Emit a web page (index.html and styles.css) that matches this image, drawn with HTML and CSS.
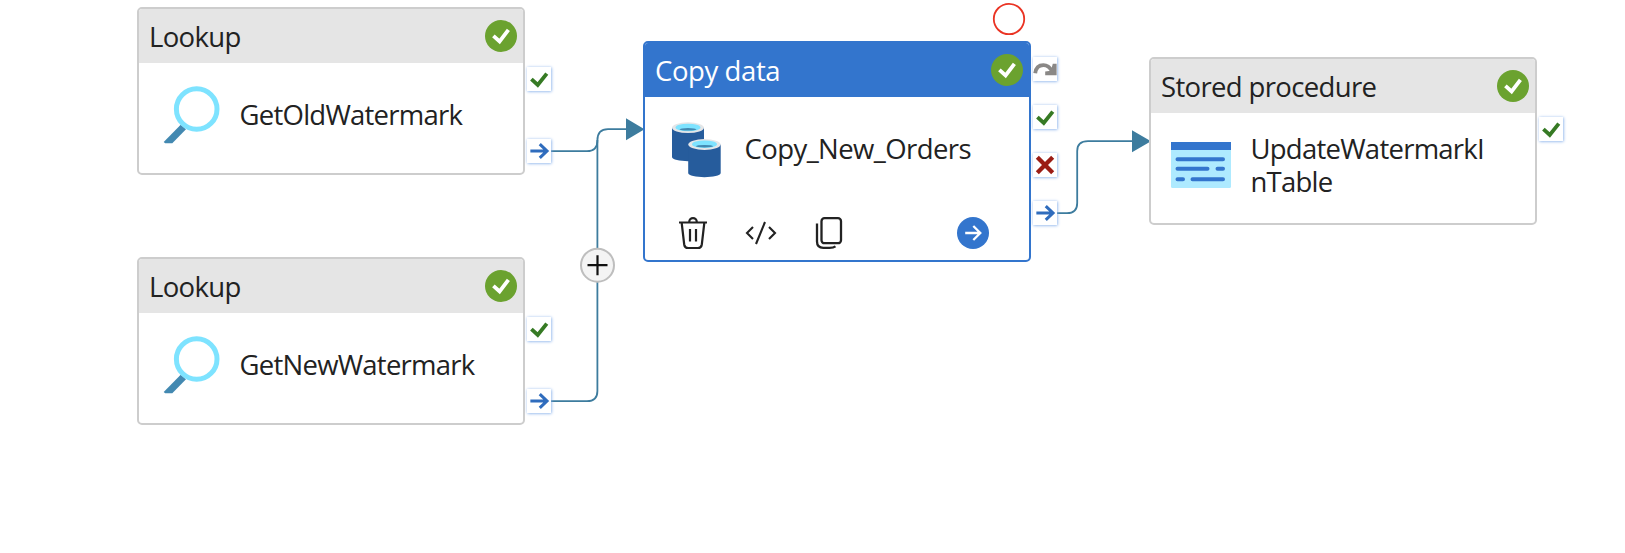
FILE: index.html
```html
<!DOCTYPE html>
<html lang="en">
<head>
<meta charset="utf-8">
<title>Pipeline</title>
<link rel="stylesheet" href="styles.css">
</head>
<body>
<svg class="defs" width="0" height="0" aria-hidden="true">
  <symbol id="badge" viewBox="0 0 32 32"><circle cx="16" cy="16" r="16" fill="#6ba22f"/><path d="M8.4 15.8l6.200 5.600L23.400 9.800" fill="none" stroke="#fff" stroke-width="3.800"/></symbol>
  <symbol id="ok" viewBox="0 0 25 25"><path d="M4.6 12.6l6.6 6L20.6 6.9" fill="none" stroke="#367a24" stroke-width="4"/></symbol>
  <symbol id="next" viewBox="0 0 25 25"><path d="M3.5 12.5H20.800M13.300 5.400l7.500 7.100-7.500 7.100" fill="none" stroke="#2f6cbd" stroke-width="3.200"/></symbol>
  <symbol id="fail" viewBox="0 0 25 25"><path d="M4.5 4.5l16 16M20.5 4.5L4.5 20.5" fill="none" stroke="#9b1c14" stroke-width="4.500"/></symbol>
  <symbol id="skip" viewBox="0 0 25 25"><path d="M2.3 17C3 11.300 6.300 8.500 10.800 8.500C14.500 8.500 17.500 10.500 20 15" fill="none" stroke="#8a8886" stroke-width="4"/><path d="M20.600 7h4v12H12.700v-4l6-.8z" fill="#8a8886"/></symbol>
  <symbol id="lens" viewBox="0 0 60 60"><path d="M3.700 58l1.500 1.300h7.100L26 45.300l-5.300-4.600z" fill="#4389b1"/><circle cx="36.700" cy="25" r="20.300" fill="#fff" stroke="#7ee3ff" stroke-width="5"/></symbol>
</svg>

<main class="canvas">
  <svg class="edges" width="1625" height="553">
    <g fill="none" stroke="#3d7c9e" stroke-width="1.800">
      <path d="M551 151.200H587Q597.400 151.200 597.400 140.500Q597.400 129.200 608 129.200H628"/>
      <path d="M551 401.200H587Q597.400 401.200 597.400 391V140"/>
      <path d="M1057 213.200H1067Q1077.200 213.200 1077.200 203V151Q1077.200 141.200 1088 141.200H1134"/>
    </g>
    <path d="M626 118.300L644.500 129.200L626 140.200zM1132 130.300L1151 141.200L1132 152.200z" fill="#3d7c9e"/>
    <circle cx="597.500" cy="265.200" r="16.500" fill="#f4f4f4" stroke="#bebebe" stroke-width="2"/>
    <path d="M587.500 265.200h20M597.500 255.200v20" stroke="#111" stroke-width="2.200"/>
    <circle cx="1009" cy="19" r="15.200" fill="none" stroke="#ea3323" stroke-width="1.800"/>
  </svg>

  <section class="node old">
    <header class="head"><span class="t-lookup">Lookup</span><svg class="badge"><use href="#badge"/></svg></header>
    <div class="body"><svg class="icon"><use href="#lens"/></svg><span class="name">GetOldWatermark</span></div>
    <div class="ports wide"><svg class="port"><use href="#ok"/></svg><svg class="port"><use href="#next"/></svg></div>
  </section>

  <section class="node new">
    <header class="head"><span class="t-lookup">Lookup</span><svg class="badge"><use href="#badge"/></svg></header>
    <div class="body"><svg class="icon"><use href="#lens"/></svg><span class="name">GetNewWatermark</span></div>
    <div class="ports wide"><svg class="port"><use href="#ok"/></svg><svg class="port"><use href="#next"/></svg></div>
  </section>

  <section class="node copy">
    <header class="head"><span class="t-copy">Copy data</span><svg class="badge"><use href="#badge"/></svg></header>
    <div class="body">
      <svg class="icon" viewBox="0 0 60 66">
        <path d="M7 12.700h32V42c0 5.500-32 5.500-32 0z" fill="#265c9c"/>
        <ellipse cx="23" cy="12.700" rx="16" ry="5.400" fill="#e4e6e8"/><ellipse cx="23" cy="12.500" rx="12.500" ry="3.800" fill="#7ee3ff"/><ellipse cx="23" cy="14.300" rx="8.500" ry="1.300" fill="#4389b1"/>
        <path d="M23.200 29.500h32.500V58c0 5.500-32.500 5.500-32.500 0z" fill="#265c9c"/>
        <ellipse cx="39.500" cy="29.500" rx="16.200" ry="5.400" fill="#e4e6e8"/><ellipse cx="39.500" cy="29.300" rx="12.500" ry="3.800" fill="#7ee3ff"/><ellipse cx="39.500" cy="31.200" rx="8.500" ry="1.300" fill="#4389b1"/>
      </svg>
      <span class="name n-copy">Copy_New_Orders</span>
    </div>
    <footer class="tools">
      <svg viewBox="0 0 32 34"><g fill="none" stroke="#222" stroke-width="2.200"><path d="M2 6.500h28M12.200 6c0-5.200 7.600-5.200 7.600 0M4.700 7l2.500 21.500q.5 3.500 3.800 3.500h10q3.300 0 3.800-3.500L27.300 7M13 13v12.500M19 13v12.500"/></g></svg>
      <svg viewBox="0 0 32 34"><path d="M8 11l-6 6 6 6M24 11l6 6-6 6M20 6l-9 22" fill="none" stroke="#222" stroke-width="2.100"/></svg>
      <svg viewBox="0 0 32 34"><g fill="none" stroke="#222" stroke-width="2.300"><rect x="8.500" y="2.200" width="19.500" height="25" rx="3"/><path d="M4 7.500v18q0 6.300 6.300 6.300h6.200q4 0 6-1.500"/></g></svg>
      <svg class="go" viewBox="0 0 32 32"><circle cx="16" cy="16" r="16" fill="#3375cd"/><path d="M8.200 16h15M16.300 9l7 7-7 7" fill="none" stroke="#fff" stroke-width="2.300"/></svg>
    </footer>
    <div class="ports"><svg class="port"><use href="#skip"/></svg><svg class="port"><use href="#ok"/></svg><svg class="port"><use href="#fail"/></svg><svg class="port"><use href="#next"/></svg></div>
  </section>

  <section class="node stored">
    <header class="head"><span class="t-stored">Stored procedure</span><svg class="badge"><use href="#badge"/></svg></header>
    <div class="body">
      <svg class="icon" viewBox="0 0 60 46"><rect width="60" height="46" rx="1.500" fill="#aeeaff"/><path d="M0 0h60v8H0z" fill="#3375cd"/><path d="M6.500 17.300h45.500M6.500 26.800h30M46.500 26.800h5.500M6.500 37.300h5.500M21.500 37.300h30.500" stroke="#3375cd" stroke-width="4" stroke-linecap="round"/></svg>
      <div class="name">UpdateWatermarkInTable</div>
    </div>
    <div class="ports"><svg class="port"><use href="#ok"/></svg></div>
  </section>
</main>
</body>
</html>
```

FILE: styles.css
```css
body { margin: 0; background: #fff; }
.defs { position: absolute; }
.canvas {
  position: relative;
  width: 1625px;
  height: 553px;
  overflow: hidden;
  font-family: "Open Sans", "Noto Sans", sans-serif;
  font-size: 27.5px;
  line-height: 33px;
  color: #222;
}
.edges { position: absolute; left: 0; top: 0; }

/* Activity cards, placed freely on the canvas */
.node {
  position: absolute;
  box-sizing: border-box;
  width: 388px;
  height: 168px;
  border: 2px solid #cdcdcd;
  border-radius: 5px;
  background: #fff;
  display: flex;
  flex-direction: column;
}
.old { left: 137px; top: 7px; }
.new { left: 137px; top: 257px; }
.copy { left: 643px; top: 41px; height: 220.500px; border-color: #3375cd; }
.stored { left: 1149px; top: 57px; }

.head {
  display: flex;
  align-items: center;
  justify-content: space-between;
  height: 54px;
  padding: 0 6px 0 10px;
  border-radius: 3px 3px 0 0;
  background: #e5e5e5;
  white-space: nowrap;
}
.copy .head { background: #3375cd; color: #fff; }
.badge { width: 32px; height: 32px; }

.body {
  display: flex;
  align-items: center;
  gap: 19.500px;
  height: 103px;
  padding-left: 21px;
}
.icon { width: 60px; height: 60px; flex: none; margin-top: -1px; }
.copy .icon { height: 66px; margin-top: -2px; }
.copy .body { padding-left: 20px; }
.stored .icon { height: 46px; margin-top: 1px; }
.stored .body { padding-left: 20px; }
.name { width: 240px; overflow-wrap: anywhere; letter-spacing: -0.75px; }
.n-copy { letter-spacing: -0.58px; }

.tools { display: flex; align-items: center; padding-left: 32px; margin-top: 16px; }
.tools svg { width: 32px; height: 34px; margin-right: 36px; }
.tools .go { height: 32px; margin: 0 0 0 76px; }

/* Output connectors to the right of each card */
.ports { position: absolute; left: 388px; top: 58px; display: flex; flex-direction: column; gap: 24px; }
.ports.wide { gap: 48px; }
.copy .ports { top: 14px; }
.port { width: 24px; height: 24px; background: #fff; box-shadow: 0 0 3px 0.5px #7ba8e8; }

.t-lookup, .t-stored { letter-spacing: -0.65px; }
.t-copy { letter-spacing: -0.4px; }
```
